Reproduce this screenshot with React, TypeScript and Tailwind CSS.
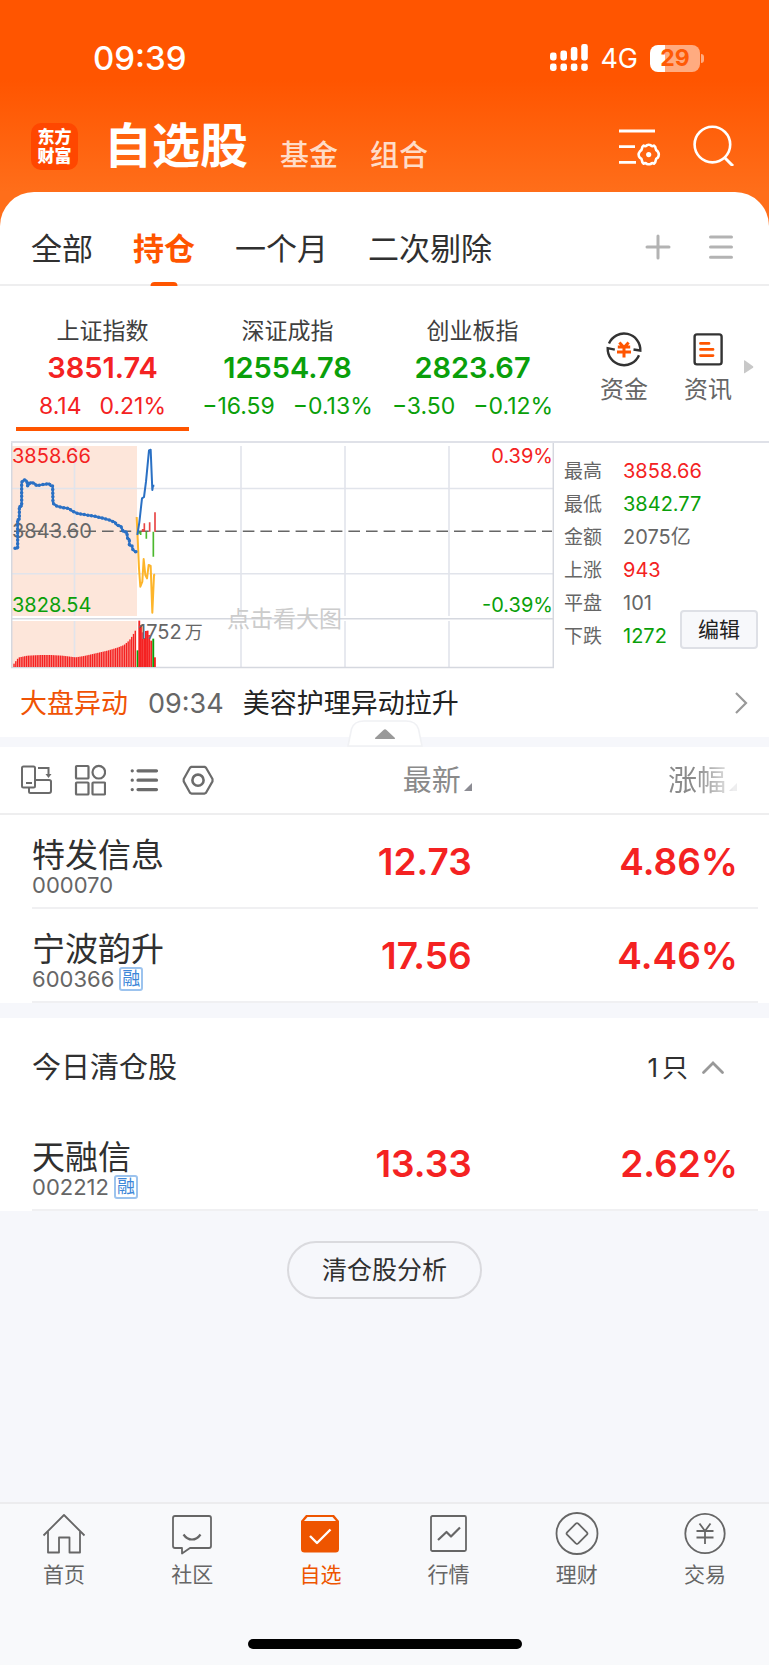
import React from "react";

const RED = "text-[#f42222]";
const GREEN = "text-[#0a9f0a]";

const tabs = ["全部", "持仓", "一个月", "二次剔除"];

const indices = [
  { name: "上证指数", value: "3851.74", diff: "8.14", pct: "0.21%", up: true },
  { name: "深证成指", value: "12554.78", diff: "−16.59", pct: "−0.13%", up: false },
  { name: "创业板指", value: "2823.67", diff: "−3.50", pct: "−0.12%", up: false },
];

const stats = [
  { label: "最高", value: "3858.66", color: RED },
  { label: "最低", value: "3842.77", color: GREEN },
  { label: "金额", value: "2075亿", color: "text-[#666]" },
  { label: "上涨", value: "943", color: RED },
  { label: "平盘", value: "101", color: "text-[#666]" },
  { label: "下跌", value: "1272", color: GREEN },
];

type Stock = { name: string; code: string; margin: boolean; price: string; pct: string };

const holdings: Stock[] = [
  { name: "特发信息", code: "000070", margin: false, price: "12.73", pct: "4.86%" },
  { name: "宁波韵升", code: "600366", margin: true, price: "17.56", pct: "4.46%" },
];
const cleared: Stock[] = [
  { name: "天融信", code: "002212", margin: true, price: "13.33", pct: "2.62%" },
];

function StatusBar() {
  return (
    <div className="flex h-[116px] items-center justify-between pr-[65px] pl-[93px]">
      <span className="text-[33px] leading-none font-medium">09:39</span>
      <div className="flex items-center">
        <svg width="38" height="28" viewBox="0 0 38 28" fill="#fff" aria-hidden="true">
          <rect x="0" y="8.5" width="6.6" height="8" rx="2.4" />
          <rect x="10.4" y="6.5" width="6.6" height="10" rx="2.4" />
          <rect x="20.8" y="3" width="6.6" height="13.5" rx="2.4" />
          <rect x="31.2" y="0" width="6.6" height="16.5" rx="2.4" />
          <rect x="0" y="19.5" width="6.6" height="7.5" rx="2.4" />
          <rect x="10.4" y="19.5" width="6.6" height="7.5" rx="2.4" />
          <rect x="20.8" y="19.5" width="6.6" height="7.5" rx="2.4" />
          <rect x="31.2" y="19.5" width="6.6" height="7.5" rx="2.4" />
        </svg>
        <span className="ml-3 text-[27px] leading-none">4G</span>
        <div className="ml-3 flex items-center gap-px">
          <div className="flex h-[27px] w-[50px] items-center justify-center rounded-lg bg-[linear-gradient(90deg,#fff_30%,#ffab80_30%)] text-[23px] leading-none font-bold text-[#ff5a05]">
            29
          </div>
          <div className="h-[9px] w-[3px] rounded-r-full bg-[#ffab80]" />
        </div>
      </div>
    </div>
  );
}

function TitleBar() {
  return (
    <div className="flex h-[76px] items-start pr-[34px] pl-[31px]">
      <div className="mt-[7px] flex size-[47px] flex-col items-center justify-center rounded-[10px] bg-[#ff4700] text-[17px] leading-[19px] font-black">
        <span>东方</span>
        <span>财富</span>
      </div>
      <nav className="ml-[26px] flex items-end">
        <a href="#watch" className="text-[48px] leading-[60px] font-bold">自选股</a>
        <a href="#fund" className="ml-8 text-[29px] leading-10 font-medium text-[#ffdcc8]">基金</a>
        <a href="#group" className="ml-8 text-[29px] leading-10 font-medium text-[#ffdcc8]">组合</a>
      </nav>
      <div className="mt-2 ml-auto flex items-center gap-8">
        <button aria-label="列表设置">
          <svg width="42" height="42" viewBox="0 0 42 42" fill="none" stroke="#fff" strokeWidth="2.8">
            <path d="M0 7H36M0 22.7H16M0 38.3H17" />
            <path
              strokeWidth="2.6"
              strokeLinejoin="round"
              d="M24.6 21.6Q26.3 22.8 28 21.2Q29.8 20.3 31.6 21.2Q33.3 22.8 35 21.6Q36.6 22.6 36.7 24.6Q36.8 26.4 38.6 27.2Q39.8 29 39.8 30.6Q39.8 32.4 38.6 33.8Q36.8 34.6 36.7 36.4Q36.6 38.4 35 39.6Q33.3 38.4 31.6 40Q29.8 40.6 28 40Q26.3 38.4 24.6 39.6Q23 38.4 22.9 36.4Q22.8 34.6 21 33.8Q19.6 32.4 19.6 30.6Q19.6 29 21 27.2Q22.8 26.4 22.9 24.6Q23 22.6 24.6 21.6Z"
            />
            <circle cx="29.7" cy="30.6" r="2.6" fill="#fff" stroke="none" />
          </svg>
        </button>
        <button aria-label="搜索">
          <svg width="42" height="42" viewBox="0 0 42 42" fill="none" stroke="#fff" strokeWidth="2.6">
            <circle cx="19.4" cy="20.6" r="17.8" />
            <path d="M31 33L40 42" strokeWidth="3" />
          </svg>
        </button>
      </div>
    </div>
  );
}

function TabRow() {
  return (
    <div className="flex h-[94px] items-center border-b-2 border-[#eeeeef] pr-9 pl-[31px]">
      <div role="tablist" className="flex h-full gap-10">
        {tabs.map((t, i) => (
          <button
            key={t}
            role="tab"
            aria-selected={i === 1}
            className={
              i === 1
                ? "relative pt-5 text-[31px] leading-none font-bold whitespace-nowrap text-[#ff5500]"
                : "pt-5 text-[31px] leading-none whitespace-nowrap text-[#303030]"
            }
          >
            {t}
            {i === 1 && <span className="absolute bottom-[-2px] left-1/2 h-1 w-[27px] -translate-x-1/2 rounded-t-sm bg-[#ff5500]" />}
          </button>
        ))}
      </div>
      <div className="ml-auto flex items-center gap-[38px] pt-[18px]">
        <button aria-label="添加分组">
          <svg width="26" height="26" viewBox="0 0 26 26" stroke="#b3b3b3" strokeWidth="3" strokeLinecap="round">
            <path d="M2 13H24M13 2V24" />
          </svg>
        </button>
        <button aria-label="分组管理">
          <svg width="24" height="26" viewBox="0 0 24 26" stroke="#b3b3b3" strokeWidth="3" strokeLinecap="round">
            <path d="M1.5 3H22.5M1.5 13H22.5M1.5 23.2H22.5" />
          </svg>
        </button>
      </div>
    </div>
  );
}

function IndexStrip() {
  return (
    <div className="grid h-[155px] grid-cols-[555fr_204fr] pl-[10px]">
      <div className="grid grid-cols-3">
        {indices.map((x, i) => (
          <button key={x.name} className="flex flex-col items-center px-[6px] pt-[33px] whitespace-nowrap">
            <span className="text-[23px] leading-6 text-[#404040]">{x.name}</span>
            <span className={`mt-[9px] text-[29px] leading-8 font-semibold ${x.up ? RED : GREEN}`}>{x.value}</span>
            <span className={`mt-[10px] flex gap-[18px] text-[23px] leading-6 ${x.up ? RED : GREEN}`}>
              <span>{x.diff}</span>
              <span>{x.pct}</span>
            </span>
            {i === 0 && <span className="mt-[9px] h-1 w-full bg-[#ff5500]" />}
          </button>
        ))}
      </div>
      <div className="flex items-start pt-[44px] pl-[35px] text-[24px] leading-7 text-[#666]">
        <a href="#money" className="flex flex-col items-center gap-2">
          <svg width="38" height="38" viewBox="0 0 38 38" fill="none" strokeWidth="2.4">
            <g stroke="#333">
              <path d="M4 13.5A16.3 16.3 0 0 1 35.3 20.5L28.5 19.5" />
              <path d="M34 25.2A16.3 16.3 0 0 1 2.7 18.2L9.8 19.7" />
            </g>
            <path stroke="#ff5500" strokeWidth="3" d="M14.4 12.5L19 17.5L23.6 12.5M12.8 17H25.2M12 22H26M19 17V27.5" />
          </svg>
          <span>资金</span>
        </a>
        <a href="#news" className="ml-9 flex flex-col items-center gap-2">
          <svg width="38" height="38" viewBox="0 0 38 38" fill="none">
            <rect x="5.6" y="4.4" width="27" height="30" rx="2.4" stroke="#333" strokeWidth="2.4" />
            <path d="M11.5 13.4H20M11.5 19.4H24M11.5 25.6H24" stroke="#ff5500" strokeWidth="2.8" strokeLinecap="round" />
          </svg>
          <span>资讯</span>
        </a>
        <svg className="mt-[30px] ml-3" width="10" height="14" viewBox="0 0 10 14" fill="#c8c8c8" aria-hidden="true">
          <path d="M0 0.5Q0 0 1 0.6L9 6.2Q9.8 7 9 7.8L1 13Q0 13.6 0 13Z" />
        </svg>
      </div>
    </div>
  );
}

const volumeStops: [number, number][] = [
  [40, 686], [50, 672], [56, 667], [80, 662], [120, 660], [150, 660], [185, 662], [225, 667],
  [250, 663], [285, 655], [320, 647], [350, 638], [370, 630], [385, 617], [395, 603], [405, 585],
];

function volumeTop(x: number) {
  for (let i = 1; i < volumeStops.length; i++) {
    const [x0, y0] = volumeStops[i - 1];
    const [x1, y1] = volumeStops[i];
    if (x <= x1) return y0 + ((y1 - y0) * (x - x0)) / (x1 - x0);
  }
  return 585;
}

const auctionBars = Array.from({ length: 69 }, (_, i) => 40 + i * 5.35);
const tradeBars: [number, number, string][] = [
  [413, 646, "#0a9f0a"], [418, 557, "#f42222"], [423, 570, "#f42222"], [428, 592, "#f42222"],
  [433, 610, "#f42222"], [438, 588, "#f42222"], [443, 587, "#f42222"], [448, 600, "#f42222"],
  [454, 617, "#f42222"], [460, 611, "#0a9f0a"], [465, 667, "#f42222"],
];
const auctionPoints =
  "45,340 53,340 53,253 58,253 58,214 65,214 65,142 72,134 80,137 83,153 92,142 103,145 110,152 120,150 135,148 148,146 152,153 158,153 159,205 170,213 188,218 205,220 218,229 235,236 260,240 285,244 310,250 330,256 345,262 350,270 362,273 370,290 380,291 383,310 388,312 388,331 396,333 398,343 405,350 412,350";

function IndexChart() {
  return (
    <svg
      role="img"
      aria-label="上证指数分时图"
      viewBox="0 0 543 226"
      className="block w-full"
      fontFamily='Inter, "Noto Sans CJK SC", sans-serif'
      fontSize="20"
    >
      <rect x="1" y="3" width="125" height="170" fill="#fde6da" />
      <rect x="1" y="178" width="125" height="46" fill="#fde6da" />
      <g stroke="#e1e4eb" strokeWidth="1.6">
        <path d="M63.5 3V173M63.5 178V224M230 3V173M230 178V224M334 3V173M334 178V224M438 3V173M438 178V224" />
        <path d="M1 45.5H542M1 130.7H542" />
      </g>
      <path d="M0.7 0V224.5H542.3V0M0 175.7H542" fill="none" stroke="#d5d8df" strokeWidth="1.5" />
      <text x="331" y="184" textAnchor="end" fontSize="23" fill="#cccccc">点击看大图</text>
      <g transform="translate(-11 -8) scale(0.33333)">
        {auctionBars.map((x) => (
          <rect key={x} x={x} y={volumeTop(x)} width="4.2" height={696 - volumeTop(x)} fill="#f42222" />
        ))}
        {tradeBars.map(([x, y, c]) => (
          <rect key={x} x={x - 3} y={y} width="5.6" height={696 - y} fill={c} />
        ))}
      </g>
      <path d="M3 88.3H541" stroke="#666" strokeWidth="1.5" strokeDasharray="11.6 6" />
      <text x="127" y="196" fill="#666">
        1752<tspan dx="3" fontSize="18">万</tspan>
      </text>
      <text x="1" y="20" fill="#f42222">3858.66</text>
      <text x="1" y="94.5" fill="#666">3843.60</text>
      <text x="1" y="168.5" fill="#0a9f0a">3828.54</text>
      <text x="542" y="20" textAnchor="end" fill="#f42222">0.39%</text>
      <text x="542" y="168.5" textAnchor="end" fill="#0a9f0a">-0.39%</text>
      <g transform="translate(-11 -8) scale(0.33333)" fill="none" strokeLinejoin="round">
        <path d="M410 246L413 310L417 400L421 455L427 440L431 372L436 420L441 430L446 390L452 393L457 533L462 420L465 418" stroke="#fdb52b" strokeWidth="6" />
        <path d="M417 290V296M422 290V300M439 290V311M460 290V365" stroke="#4cb82e" strokeWidth="5" />
        <path d="M428 290V282M433 290V265M449 290V262M465 290V232" stroke="#e84545" strokeWidth="5" />
        <polyline points={auctionPoints} stroke="#2a70c4" strokeWidth="6.5" />
        <polyline points={auctionPoints} stroke="#2a70c4" strokeWidth="10.5" strokeLinecap="round" strokeDasharray="0 11" />
        <polyline points="412,300 418,262 426,190 432,186 438,140 447,46 452,44 457,165 459,152 463,152" stroke="#2a70c4" strokeWidth="6" />
      </g>
    </svg>
  );
}

function MarketPanel() {
  return (
    <div className="pl-[11px]">
      <div className="relative grid grid-cols-[543fr_215fr] items-start border-t-2 border-[#dfe1e8]">
        <IndexChart />
        <dl className="grid grid-cols-[59px_1fr] pt-3 pl-[10px] text-[20px] leading-[33px]">
          {stats.map((s) => (
            <React.Fragment key={s.label}>
              <dt className="text-[19px] text-[#666]">{s.label}</dt>
              <dd className={s.color}>{s.value}</dd>
            </React.Fragment>
          ))}
        </dl>
        <button className="absolute right-[11px] bottom-[20px] h-[39px] w-[78px] rounded-[4px] border-2 border-[#dee0e6] bg-[#f7f8fb] text-[21px] leading-none text-[#222]">
          编辑
        </button>
      </div>
    </div>
  );
}

function NewsRow() {
  return (
    <div className="relative flex h-[78px] items-center border-b-[10px] border-[#f6f7fb] pr-[21px] pl-5 text-[27px] leading-none">
      <span className="text-[#f05305]">大盘异动</span>
      <time className="ml-5 text-[#666]">09:34</time>
      <a href="#move" className="ml-[19px] flex flex-1 items-center justify-between text-[#222]">
        美容护理异动拉升
        <svg width="14" height="24" viewBox="0 0 14 24" fill="none" stroke="#999" strokeWidth="2.2">
          <path d="M2 2L12 12L2 22" />
        </svg>
      </a>
      <button aria-label="收起" className="absolute top-[51px] left-1/2 -translate-x-1/2">
        <svg width="76" height="27" viewBox="0 0 76 27">
          <path d="M1 26L4.5 9Q7 1 17 1H59Q69 1 71.5 9L75 26Z" fill="#fff" stroke="#f0f1f4" strokeWidth="1.6" />
          <path d="M28 18L36.5 10Q38 8.6 39.5 10L48 18Q48.6 19 47 19H29Q27.4 19 28 18Z" fill="#999" />
        </svg>
      </button>
    </div>
  );
}

function Toolbar() {
  return (
    <div className="flex items-center gap-[22px] pl-5">
      <button aria-label="横屏">
        <svg width="32" height="32" viewBox="0 0 32 32" fill="none" stroke="#6b6b6b" strokeWidth="2">
          <path d="M9 24V27.5Q9 29 10.5 29H29Q31 29 31 27V17.5Q31 16 29 16H15" />
          <rect x="2" y="2.5" width="13" height="21" rx="1.5" fill="#fff" />
          <path d="M6 19H12M18 4H28.5V12" />
          <path d="M25.5 10H31.5L28.5 14Z" fill="#6b6b6b" stroke="none" />
        </svg>
      </button>
      <button aria-label="宫格">
        <svg width="32" height="32" viewBox="0 0 32 32" fill="none" stroke="#6b6b6b" strokeWidth="2.2">
          <rect x="2" y="2" width="12.5" height="12.5" rx="0.8" />
          <circle cx="24.8" cy="8.2" r="6.3" />
          <rect x="2" y="18.5" width="12.5" height="12" rx="0.8" />
          <rect x="18.5" y="18.5" width="12.5" height="12" rx="0.8" />
        </svg>
      </button>
      <button aria-label="列表">
        <svg width="32" height="32" viewBox="0 0 32 32" fill="none" stroke="#6b6b6b" strokeWidth="3.2" strokeLinecap="round">
          <path d="M10 6.8H28.5M10 16.2H28.5M10 25.6H28.5" />
          <path d="M4.2 6.8H4.3M4.2 16.2H4.3M4.2 25.6H4.3" />
        </svg>
      </button>
      <button aria-label="设置">
        <svg width="32" height="32" viewBox="0 0 32 32" fill="none" stroke="#6b6b6b" strokeWidth="2.2" strokeLinejoin="round">
          <path d="M9.5 2.8H22.5L24 3.7L30.5 15L30.5 17.4L24 28.7L22.5 29.6H9.5L8 28.7L1.7 17.4V15L8 3.7Z" />
          <circle cx="16" cy="16.2" r="5.6" strokeWidth="2.6" />
        </svg>
      </button>
    </div>
  );
}

function Columns() {
  return (
    <colgroup>
      <col className="w-[36%]" />
      <col className="w-[26%]" />
      <col />
    </colgroup>
  );
}

function StockRow({ s }: { s: Stock }) {
  return (
    <tr>
      <td className="pl-8">
        <div className="h-[94px] border-b-2 border-[#f0f0f2] pt-[22px]">
          <div className="text-[33px] leading-9 text-[#303030]">{s.name}</div>
          <div className="flex h-6 items-center gap-[5px] text-[22px] leading-none text-[#666]">
            {s.code}
            {s.margin && (
              <span className="flex size-6 items-center justify-center rounded-[3px] border-2 border-[#9cc3ee] text-[18px] leading-none text-[#3d86d8]">
                融
              </span>
            )}
          </div>
        </div>
      </td>
      <td className={`text-right text-[37px] font-semibold ${RED}`}>
        <div className="h-[94px] border-b-2 border-[#f0f0f2] pr-[5px] leading-[94px]">{s.price}</div>
      </td>
      <td className={`pr-[11px] text-right text-[37px] font-semibold ${RED}`}>
        <div className="h-[94px] border-b-2 border-[#f0f0f2] pr-5 leading-[94px]">{s.pct}</div>
      </td>
    </tr>
  );
}

function SortMark() {
  return (
    <svg width="8" height="8" viewBox="0 0 8 8" className="ml-[3px] inline-block align-baseline" aria-hidden="true">
      <path d="M8 0V8H0Z" fill="#8c8c93" />
    </svg>
  );
}

function Holdings() {
  return (
    <table className="w-full table-fixed border-collapse">
      <Columns />
      <thead>
        <tr className="h-[67px] border-b-2 border-[#eeeeef] text-[29px] leading-none text-[#8a8a8a]">
          <th className="p-0 text-left font-normal">
            <Toolbar />
          </th>
          <th className="p-0 pr-[5px] text-right font-normal whitespace-nowrap">
            <button>最新<SortMark /></button>
          </th>
          <th className="p-0 pr-[32px] text-right font-normal whitespace-nowrap">
            <button className="[mask-image:linear-gradient(90deg,#000_40%,rgba(0,0,0,0.15)_95%)]">涨幅<SortMark /></button>
          </th>
        </tr>
      </thead>
      <tbody>
        {holdings.map((s) => (
          <StockRow key={s.code} s={s} />
        ))}
      </tbody>
    </table>
  );
}

function Cleared() {
  return (
    <section className="border-t-[15px] border-[#f6f7fb]">
      <div className="flex h-[99px] items-center justify-between pr-[44px] pl-8 text-[#303030]">
        <h2 className="text-[29px] leading-none">今日清仓股</h2>
        <button className="flex items-center text-[26px] leading-none">
          1<span className="ml-1">只</span>
          <svg className="ml-[13px]" width="24" height="15" viewBox="0 0 24 15" fill="none" stroke="#999" strokeWidth="2.8" strokeLinecap="round">
            <path d="M2.5 12.5L12 3L21.5 12.5" />
          </svg>
        </button>
      </div>
      <table className="w-full table-fixed border-collapse">
        <Columns />
        <tbody>
          {cleared.map((s) => (
            <StockRow key={s.code} s={s} />
          ))}
        </tbody>
      </table>
    </section>
  );
}

const navItems = [
  {
    label: "首页",
    icon: (
      <g>
        <path d="M1.5 23.5L22 3L42.5 23.5" />
        <path d="M6 19.5V40.5H17V25.5H27.5V40.5H38V19.5" />
      </g>
    ),
  },
  {
    label: "社区",
    icon: (
      <g>
        <path d="M5 4H39Q41 4 41 6V34Q41 36 39 36H20L12 41.5V36H5Q3 36 3 34V6Q3 4 5 4Z" />
        <path d="M13.5 22.5Q17 27.5 22 27.5Q27 27.5 30.5 22.5" strokeWidth="2.2" />
      </g>
    ),
  },
  {
    label: "自选",
    icon: (
      <g>
        <path d="M8 3H36L41 9V37Q41 40.5 37.5 40.5H6.5Q3 40.5 3 37V9Z" fill="#ee5500" stroke="none" />
        <path d="M9.5 5H34.5L38 9H6Z" fill="#f8f9fb" stroke="none" />
        <path d="M12 24L19 31L32.5 17.5" stroke="#fff" strokeWidth="2.4" />
      </g>
    ),
  },
  {
    label: "行情",
    icon: (
      <g>
        <rect x="4" y="4" width="35" height="35" rx="1.5" />
        <path d="M11 28L19.5 20L24 24.5L33 15.5" strokeWidth="2.2" />
      </g>
    ),
  },
  {
    label: "理财",
    icon: (
      <g>
        <circle cx="22" cy="21.5" r="20.5" />
        <path d="M20.8 11.7Q22 10.5 23.2 11.7L31.9 20.3Q33 21.5 31.9 22.7L23.2 31.4Q22 32.5 20.8 31.4L12.1 22.7Q11 21.5 12.1 20.3Z" />
      </g>
    ),
  },
  {
    label: "交易",
    icon: (
      <g>
        <circle cx="22" cy="21.5" r="19.7" />
        <path d="M16.5 11.5L22 19L27.5 11.5M13.5 19H30.5M13.5 25.5H30.5M22 19V32" />
      </g>
    ),
  },
];

function BottomNav() {
  return (
    <footer className="mt-auto border-t-2 border-[#ececee] bg-[#f8f9fb]">
      <nav className="grid grid-cols-6">
        {navItems.map((n) => (
          <a
            key={n.label}
            href="#nav"
            className={
              n.label === "自选"
                ? "flex flex-col items-center pt-2 text-[21px] leading-6 text-[#ee5500]"
                : "flex flex-col items-center pt-2 text-[21px] leading-6 text-[#666]"
            }
          >
            <svg width="44" height="44" viewBox="0 0 44 44" fill="none" stroke="#666" strokeWidth="1.8" strokeLinejoin="round">
              {n.icon}
            </svg>
            <span className="mt-[7px]">{n.label}</span>
          </a>
        ))}
      </nav>
      <div className="mx-auto mt-[52px] mb-4 h-[10px] w-[274px] rounded-full bg-black" />
    </footer>
  );
}

export default function App() {
  return (
    <div className='flex min-h-screen flex-col bg-[#f6f7fb] font-[Inter,"Noto_Sans_CJK_SC",sans-serif]'>
      <header className="-mb-10 bg-[linear-gradient(#ff5500_80px,#ff6e1a_192px)] pb-10 text-white">
        <StatusBar />
        <TitleBar />
      </header>
      <main>
        <div className="overflow-hidden rounded-t-[34px] bg-white">
          <TabRow />
          <IndexStrip />
          <MarketPanel />
          <NewsRow />
          <Holdings />
          <Cleared />
        </div>
        <div className="flex justify-center pt-[30px] pb-8">
          <button className="h-[58px] rounded-full border-2 border-[#dadade] px-[33px] text-[25px] leading-none text-[#303030]">
            清仓股分析
          </button>
        </div>
      </main>
      <BottomNav />
    </div>
  );
}
